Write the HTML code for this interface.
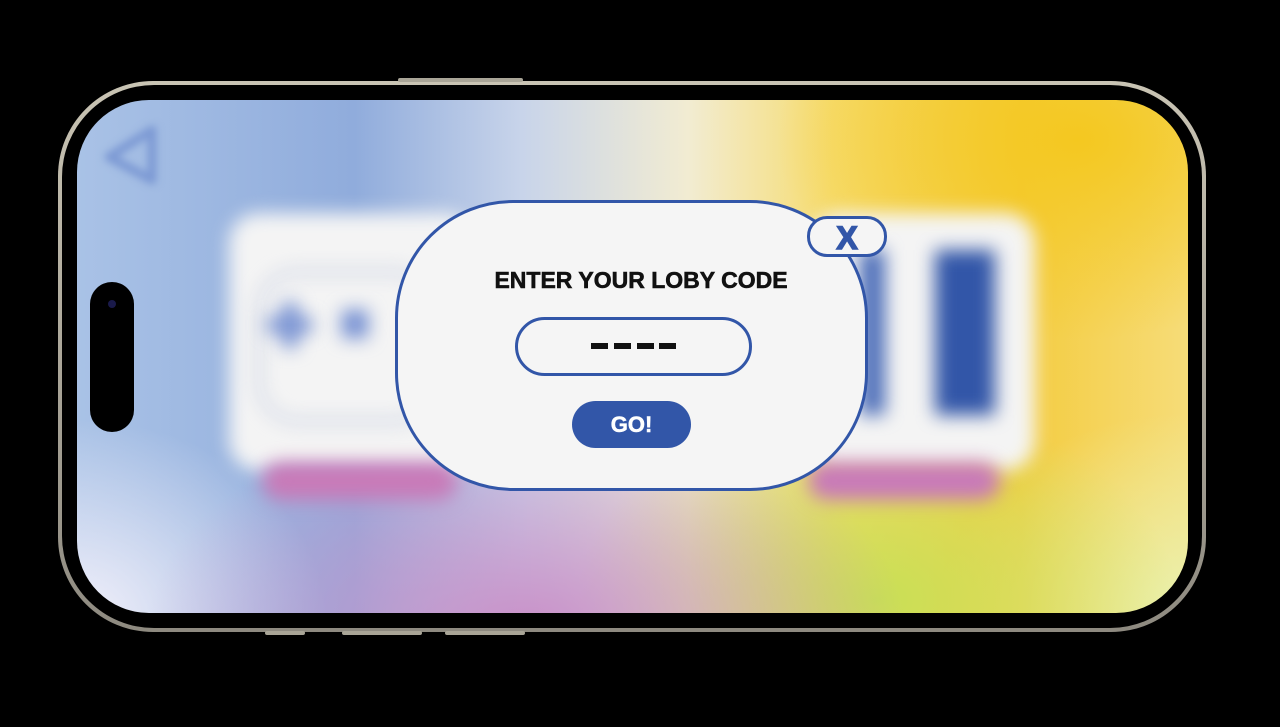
<!DOCTYPE html><html><head><style>
body{margin:0;width:1280px;height:727px;background:#000;overflow:hidden;position:relative;font-family:"Liberation Sans",sans-serif}
.frame{position:absolute;left:58px;top:81px;width:1148px;height:551px;border-radius:95px;background:linear-gradient(#c9c4b4,#8e8a80);}
.bez{position:absolute;left:62px;top:85px;width:1140px;height:543px;border-radius:92px;background:#000}
.btn{position:absolute;background:#a9a597;border-radius:2px}
.screen{position:absolute;left:77px;top:100px;width:1111px;height:513px;border-radius:72px;overflow:hidden;
background:
radial-gradient(ellipse 300px 200px at 1000px 40px,#f4c820 0%,rgba(244,200,32,0) 100%),
radial-gradient(ellipse 380px 220px at 450px 530px,#c990c8 0%,rgba(201,144,200,0) 100%),
radial-gradient(ellipse 300px 200px at 800px 500px,#c8df55 0%,rgba(200,223,85,0) 100%),
radial-gradient(ellipse 250px 200px at 0px 520px,#f2f0fa 0%,rgba(242,240,250,0) 100%),
radial-gradient(ellipse 250px 200px at 1111px 513px,#eaf2b0 0%,rgba(234,242,176,0) 100%),
linear-gradient(90deg,#a9c2e6 0%,#90acdc 25%,#c8d4ea 40%,#f2ecd2 55%,#f6dc70 68%,#f4cc40 85%,#f6dc78 100%)}
.blur{position:absolute;filter:blur(9px)}
.modal{position:absolute;left:395px;top:200px;width:467px;height:285px;border:3px solid #3256a8;border-radius:118px;background:#f5f5f5}
.close{position:absolute;left:807px;top:216px;width:74px;height:35px;border:3px solid #3256a8;border-radius:20px;background:#f5f5f5;color:#3256a8;font-weight:900;font-size:32px;text-align:center;line-height:38px;-webkit-text-stroke:1.5px #3256a8}
.title{position:absolute;left:395px;width:492px;top:267px;text-align:center;font-weight:bold;font-size:23px;color:#111;-webkit-text-stroke:0.6px #111}
.input{position:absolute;left:515px;top:317px;width:231px;height:53px;border:3px solid #3256a8;border-radius:30px;background:#f5f5f5}
.dash{position:absolute;top:343px;width:17px;height:6px;background:#111}
.go{position:absolute;left:572px;top:401px;width:119px;height:47px;border-radius:24px;background:#3256a8;color:#fff;font-weight:bold;font-size:22px;text-align:center;line-height:47px;-webkit-text-stroke:0.5px #fff}
</style></head><body>
<div class="frame"></div>
<div class="btn" style="left:398px;top:78px;width:125px;height:4px"></div>
<div class="btn" style="left:265px;top:631px;width:40px;height:4px"></div>
<div class="btn" style="left:342px;top:631px;width:80px;height:4px"></div>
<div class="btn" style="left:445px;top:631px;width:80px;height:4px"></div>
<div class="bez"></div>
<div class="screen">
<svg class="blur" style="left:20px;top:22px;filter:blur(4px)" width="70" height="70"><path d="M55 8 L55 58 L12 35 Z" fill="none" stroke="#7d9ad4" stroke-width="9" stroke-linejoin="round"/></svg>
<div class="blur" style="left:152px;top:113px;width:245px;height:258px;background:#f4f4f4;border-radius:30px"></div>
<div class="blur" style="left:733px;top:113px;width:225px;height:258px;background:#f4f4f4;border-radius:30px"></div>
<div class="blur" style="left:180px;top:170px;width:170px;height:145px;border:4px solid #b8c2dc;border-radius:40px"></div>
<div class="blur" style="left:190px;top:218px;width:45px;height:14px;background:#6f8bd0"></div>
<div class="blur" style="left:206px;top:202px;width:14px;height:46px;background:#6f8bd0"></div>
<div class="blur" style="left:265px;top:210px;width:26px;height:28px;background:#6f8bd0"></div>
<div class="blur" style="left:783px;top:150px;width:25px;height:165px;background:#4a6cb8"></div>
<div class="blur" style="left:858px;top:150px;width:60px;height:165px;background:#3256a8"></div>
<div class="blur" style="left:185px;top:362px;width:195px;height:38px;background:#c87ab8;border-radius:20px"></div>
<div class="blur" style="left:731px;top:362px;width:192px;height:38px;background:#c87ab8;border-radius:20px"></div>
</div>
<div style="position:absolute;left:90px;top:282px;width:44px;height:150px;border-radius:22px;background:#000"></div>
<div style="position:absolute;left:108px;top:300px;width:8px;height:8px;border-radius:50%;background:#1a1a4a"></div>
<div class="modal"></div>
<div class="close">X</div>
<div class="title">ENTER YOUR LOBY CODE</div>
<div class="input"></div>
<div class="dash" style="left:591px"></div><div class="dash" style="left:614px"></div><div class="dash" style="left:637px"></div><div class="dash" style="left:659px"></div>
<div class="go">GO!</div>
</body></html>
